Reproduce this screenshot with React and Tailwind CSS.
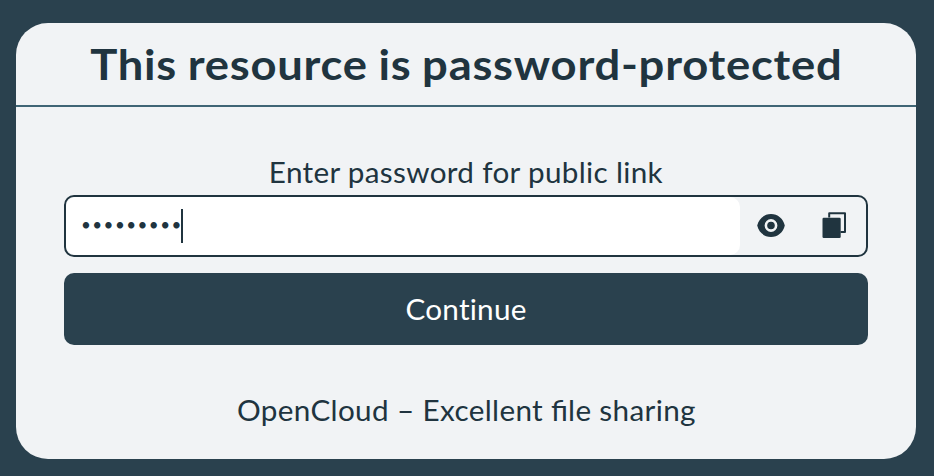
function EyeIcon() {
  return (
    <svg className="h-[30px] w-[30px]" viewBox="0 0 30 30" fill="currentColor" aria-hidden="true">
      <path
        fillRule="evenodd"
        d="M15 3C21.8 3 27.2 7.7 28.8 14.5C27.2 21.3 21.8 26 15 26S2.8 21.3 1.2 14.5C2.8 7.7 8.2 3 15 3ZM15 8.1a6.4 6.4 0 1 0 0 12.8a6.4 6.4 0 0 0 0-12.8Z"
      />
      <circle cx="15" cy="14.5" r="3.8" />
    </svg>
  );
}

function CopyIcon() {
  return (
    <svg className="h-[30px] w-[30px]" viewBox="0 0 30 30" fill="currentColor" aria-hidden="true">
      <path d="M8.2 6.5V2.3Q8.2 1.3 9.2 1.3H25Q26 1.3 26 2.3V21Q26 22 25 22H20.5V20H24V3.3H10.2V6.5Z" />
      <rect x="2.5" y="6.8" width="18.2" height="20.2" rx="1.2" />
    </svg>
  );
}

export default function App() {
  return (
    <main className="flex h-[476px] w-[934px] bg-[#2a414e] pt-[23px] pl-4 font-['Lato',sans-serif] text-[#20343f]">
      <section className="flex h-[436px] w-[900px] flex-col overflow-hidden rounded-[32px] bg-[#f1f3f5]">
        <header className="flex h-[84px] items-center justify-center border-b-2 border-[#3f6575]">
          <h1 className="origin-center scale-x-[1.08] whitespace-nowrap text-[42px] leading-none font-bold tracking-[0.7px] [word-spacing:-1px]">
            This resource is password-protected
          </h1>
        </header>
        <form className="flex flex-col px-12 pt-[45px] text-[28px]" onSubmit={(e) => e.preventDefault()}>
          <label className="flex h-[43px] items-center justify-center pb-[3px] whitespace-nowrap">
            <span className="scale-x-[1.06] tracking-[0.3px]">Enter password for public link</span>
          </label>
          <div className="flex h-[62px] overflow-hidden rounded-[10px] border-2 border-[#20343f]">
            <div className="flex w-[674px] items-center rounded-[10px] bg-white pl-[15px]">
              <span className="w-[100px] pb-[2px] text-[17px] tracking-[1.45px] whitespace-nowrap">•••••••••</span>
              <span className="h-[34px] w-[2px] bg-[#20343f]" />
            </div>
            <div className="flex flex-1 items-center justify-between pr-[16px] pb-px pl-4">
              <EyeIcon />
              <CopyIcon />
            </div>
          </div>
          <button className="mt-4 flex h-[72px] items-center justify-center rounded-[10px] bg-[#2a414e] pb-px text-white">
            <span className="scale-x-[1.06] tracking-[0.2px]">Continue</span>
          </button>
        </form>
        <footer className="mt-[45px] flex justify-center text-[28px] leading-[40px] whitespace-nowrap">
          <span className="scale-x-[1.06] tracking-[0.33px]">
            OpenCloud – Excellent <span className="tracking-normal">fi</span>le sharing
          </span>
        </footer>
      </section>
    </main>
  );
}
